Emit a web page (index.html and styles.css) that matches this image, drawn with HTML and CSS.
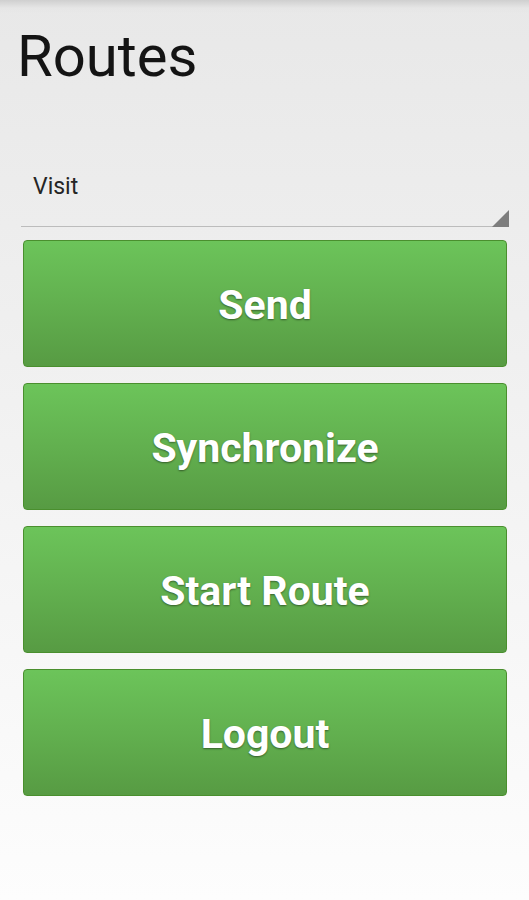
FILE: index.html
```html
<!DOCTYPE html>
<html lang="en">
<head>
    <meta charset="UTF-8">
    <meta name="viewport" content="width=device-width, initial-scale=1.0">
    <title>Routes</title>
    <link rel="stylesheet" href="styles.css">
</head>
<body>
  <div class="screen">
      <h1 class="title">Routes</h1>

      <div class="spinner">
          <span class="spinner-text">Visit</span>
          <span class="spinner-arrow"></span>
      </div>

      <div class="actions">
          <button class="action-btn" type="button">Send</button>
          <button class="action-btn" type="button">Synchronize</button>
          <button class="action-btn" type="button">Start Route</button>
          <button class="action-btn" type="button">Logout</button>
      </div>
  </div>
</body>
</html>
```
FILE: styles.css
```css
html, body {
    margin: 0;
    padding: 0;
    height: 100%;
}
body {
    font-family: Roboto, "Liberation Sans", Arial, sans-serif;
    background: linear-gradient(to bottom, #e8e8e8 0%, #f0f0f0 40%, #fdfdfd 100%);
}
.screen {
    min-height: 900px;
    box-sizing: border-box;
    padding-top: 27px;
    background: linear-gradient(to bottom, #cfcfcf 0px, #e6e6e6 8px, rgba(233,233,233,0) 14px);
}
.title {
    margin: 0 0 0 17px;
    font-size: 58px;
    font-weight: 400;
    line-height: 1;
    color: #141414;
}
.spinner {
    position: relative;
    box-sizing: border-box;
    height: 67px;
    margin: 75px 20px 0 21px;
    padding: 15px 0 0 12px;
    border-bottom: 1px solid #bcbcbc;
}
.spinner-text {
    font-size: 23px;
    line-height: 1;
    color: #252525;
}
.spinner-arrow {
    position: absolute;
    right: 0;
    bottom: -1px;
    width: 17px;
    height: 17px;
    background: #7d7d7d;
    clip-path: polygon(100% 0, 100% 100%, 0 100%);
}
.actions {
    display: flex;
    flex-direction: column;
    gap: 16px;
    margin: 13px 22px 0 23px;
}
.action-btn {
    height: 127px;
    padding: 2px 0 0;
    border: 1px solid #4a8f2e;
    border-radius: 4px;
    background: linear-gradient(to bottom, #6cc45a 0%, #62b04f 50%, #579b43 100%);
    color: #ffffff;
    font-family: Roboto, "Liberation Sans", Arial, sans-serif;
    font-size: 41px;
    font-weight: 700;
    text-shadow: 0 1px 2px rgba(0,0,0,0.45);
    cursor: pointer;
}
```
